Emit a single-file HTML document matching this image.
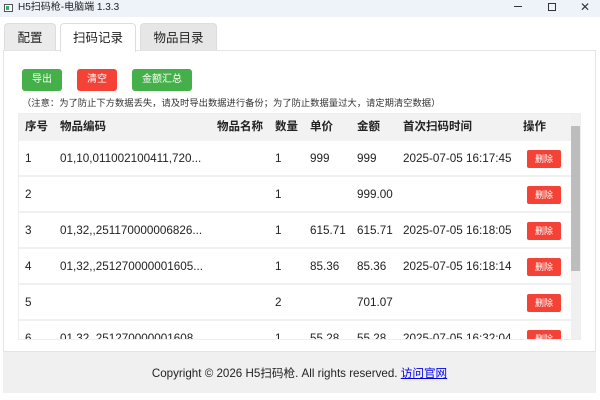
<!DOCTYPE html>
<html><head><meta charset="utf-8"><style>
*{margin:0;padding:0;box-sizing:border-box}
body{width:600px;height:400px;overflow:hidden;background:#fff;font-family:"Liberation Sans","Noto Sans CJK SC",sans-serif;position:relative;color:#222}
.title{position:absolute;left:0;top:0;width:600px;height:17px;background:#eef3fa;font-size:10px;line-height:16px}
.title .ic{position:absolute;left:4px;top:4px;width:9px;height:8px;border:1px solid #555;background:#fff}
.title .ic:after{content:"";position:absolute;left:1px;top:1px;width:3px;height:4px;background:#3a7}
.title span{position:absolute;left:18px;top:0;color:#222}
.ctl{position:absolute;top:0;font-size:11px;color:#333}
.tab{position:absolute;top:23px;height:28px;font-size:12.5px;line-height:28px;text-align:center;background:#e6e6e6;border:1px solid #ddd;border-bottom:none;border-radius:4px 4px 0 0}
.panel{position:absolute;left:3px;top:50px;width:593px;height:302px;border:1px solid #e4e4e4;background:#fff}
.btn{position:absolute;top:69px;height:22px;color:#fff;font-size:10px;line-height:22px;text-align:center;border-radius:3px}
.g{background:#45b04a}.r{background:#f44336}
.note{position:absolute;left:22px;top:95px;font-size:9.3px;color:#333}
.tbl{position:absolute;left:18px;top:113px;width:563px;height:227px;overflow:hidden;border:1px solid #eee}
.hd{position:absolute;left:0;top:0;width:552px;height:27px;background:#f2f2f2;font-size:11.5px;font-weight:bold;line-height:27px}
.row{position:absolute;left:0;width:552px;height:36px;border-bottom:2px solid #f0f0f0;font-size:11.7px;line-height:36px}
.c{position:absolute;top:0;white-space:nowrap}
.del{position:absolute;left:508px;top:9px;width:34px;height:18px;background:#f44336;color:#fff;font-size:9px;line-height:18px;text-align:center;border-radius:2px}
.sb{position:absolute;left:552px;top:0;width:10px;height:227px;background:#f0f0f0}
.thumb{position:absolute;left:552px;top:12px;width:10px;height:145px;background:#bdbdbd}
.footer{position:absolute;left:3px;top:352px;width:593px;height:41px;background:#f0f0f0;font-size:11.6px;text-align:center;line-height:44px}
.footer a{color:#00e;text-decoration:underline}
</style></head><body>
<div class="title"><div class="ic"></div><span>H5扫码枪-电脑端 1.3.3</span>
<div class="ctl" style="left:514px;top:6px;width:8px;height:1px;background:#333"></div>
<div class="ctl" style="left:548px;top:3px;width:8px;height:8px;border:1px solid #333"></div>
<div class="ctl" style="left:580px;top:0;font-size:12px;line-height:15px">✕</div>
</div>
<div class="tab" style="left:4px;width:52px;background:#ebebeb">配置</div>
<div class="tab" style="left:60px;width:76px;background:#fff;height:29px;z-index:2">扫码记录</div>
<div class="tab" style="left:140px;width:77px">物品目录</div>
<div class="panel"></div>
<div class="btn g" style="left:22px;width:40px">导出</div>
<div class="btn r" style="left:77px;width:40px">清空</div>
<div class="btn g" style="left:132px;width:60px">金额汇总</div>
<div class="note">（注意：为了防止下方数据丢失，请及时导出数据进行备份；为了防止数据量过大，请定期清空数据）</div>
<div class="tbl">
<div class="hd"><span class="c" style="left:6px">序号</span><span class="c" style="left:41px">物品编码</span><span class="c" style="left:198px">物品名称</span><span class="c" style="left:256px">数量</span><span class="c" style="left:291px">单价</span><span class="c" style="left:338px">金额</span><span class="c" style="left:384px">首次扫码时间</span><span class="c" style="left:504px">操作</span></div>
<div class="row" style="top:27px"><span class="c" style="left:6px">1</span><span class="c" style="left:41px">01,10,011002100411,720...</span><span class="c" style="left:256px">1</span><span class="c" style="left:291px">999</span><span class="c" style="left:338px">999</span><span class="c" style="left:384px">2025-07-05 16:17:45</span><div class="del">删除</div></div>
<div class="row" style="top:63px"><span class="c" style="left:6px">2</span><span class="c" style="left:256px">1</span><span class="c" style="left:338px">999.00</span><div class="del">删除</div></div>
<div class="row" style="top:99px"><span class="c" style="left:6px">3</span><span class="c" style="left:41px">01,32,,251170000006826...</span><span class="c" style="left:256px">1</span><span class="c" style="left:291px">615.71</span><span class="c" style="left:338px">615.71</span><span class="c" style="left:384px">2025-07-05 16:18:05</span><div class="del">删除</div></div>
<div class="row" style="top:135px"><span class="c" style="left:6px">4</span><span class="c" style="left:41px">01,32,,251270000001605...</span><span class="c" style="left:256px">1</span><span class="c" style="left:291px">85.36</span><span class="c" style="left:338px">85.36</span><span class="c" style="left:384px">2025-07-05 16:18:14</span><div class="del">删除</div></div>
<div class="row" style="top:171px"><span class="c" style="left:6px">5</span><span class="c" style="left:256px">2</span><span class="c" style="left:338px">701.07</span><div class="del">删除</div></div>
<div class="row" style="top:207px"><span class="c" style="left:6px">6</span><span class="c" style="left:41px">01,32,,251270000001608...</span><span class="c" style="left:256px">1</span><span class="c" style="left:291px">55.28</span><span class="c" style="left:338px">55.28</span><span class="c" style="left:384px">2025-07-05 16:32:04</span><div class="del">删除</div></div>
<div class="sb"></div><div class="thumb"></div>
</div>
<div class="footer">Copyright © 2026 H5扫码枪. All rights reserved. <a>访问官网</a></div>
</body></html>
